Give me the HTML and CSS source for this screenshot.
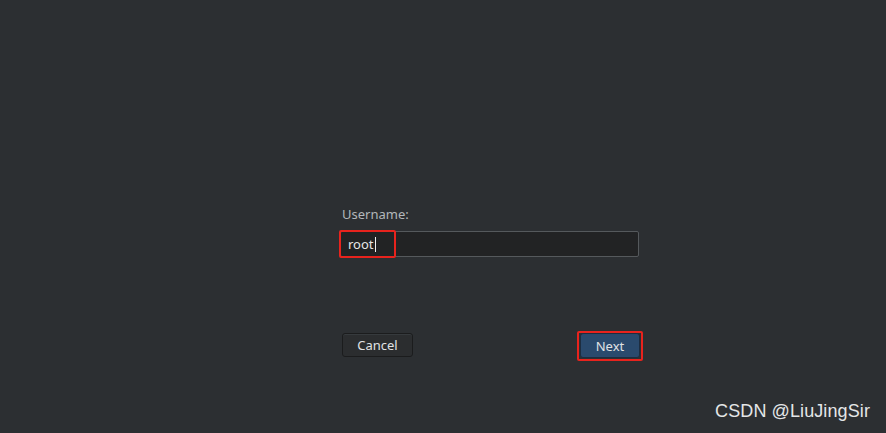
FILE: index.html
```html
<!DOCTYPE html>
<html>
<head>
<meta charset="utf-8">
<link rel="stylesheet" href="styles.css">
</head>
<body>
<div class="screen">
  <div class="form">
    <div class="label">Username:</div>
    <div class="field">
      <span class="value">root</span><span class="caret"></span>
      <span class="mark mark-input"></span>
    </div>
    <div class="actions">
      <button class="btn btn-cancel">Cancel</button>
      <div class="next-wrap">
        <button class="btn btn-next">Next</button>
      </div>
    </div>
  </div>
  <div class="watermark">CSDN @LiuJingSir</div>
</div>
</body>
</html>
```
FILE: styles.css
```css
html, body {
  margin: 0;
  padding: 0;
  background: #2c2f32;
}
.screen {
  width: 886px;
  height: 433px;
  position: relative;
  overflow: hidden;
  background: #2c2f32;
  font-family: "Noto Sans", "Open Sans", sans-serif;
}
.form {
  width: 299px;
  margin-left: 340px;
  padding-top: 205px;
}
.label {
  font-size: 13px;
  line-height: 18px;
  color: #b3b7ba;
  margin-left: 2px;
}
.field {
  position: relative;
  margin-top: 8px;
  height: 24px;
  border: 1px solid #55595c;
  border-radius: 2px;
  background: #222324;
  display: flex;
  align-items: center;
  padding-left: 7px;
}
.value {
  font-size: 13px;
  color: #e6e6e6;
  line-height: 16px;
}
.caret {
  display: inline-block;
  width: 1px;
  height: 15px;
  background: #f0f0f0;
  margin-left: 1px;
}
.mark {
  position: absolute;
  border: 2px solid #e8231d;
  border-radius: 2px;
}
.mark-input {
  left: -2px;
  top: -2px;
  width: 53px;
  height: 24px;
}
.actions {
  display: flex;
  justify-content: space-between;
  align-items: flex-start;
  margin-top: 74px;
  width: 301px;
  margin-left: 2px;
}
.btn {
  font-family: "Noto Sans", "Open Sans", sans-serif;
  font-size: 13px;
  color: #e0e2e4;
  border-radius: 3px;
  padding: 0;
  height: 24px;
}
.btn-cancel {
  width: 71px;
  margin-top: 2px;
  background: #2b2d2f;
  border: 1px solid #1b1c1d;
  box-shadow: inset 0 1px 0 #363a3d;
}
.next-wrap {
  border: 2px solid #e8231d;
  border-radius: 2px;
  padding: 0 1px 1px 1px;
  display: flex;
}
.btn-next {
  width: 60px;
  height: 25px;
  background: #2a4a6d;
  border: 1px solid #1d2d40;
}
.watermark {
  position: absolute;
  right: 16px;
  top: 400px;
  font-family: "Liberation Sans", Arial, sans-serif;
  font-size: 18px;
  line-height: 22px;
  letter-spacing: 0.1px;
  color: #e4e6e7;
}
```
